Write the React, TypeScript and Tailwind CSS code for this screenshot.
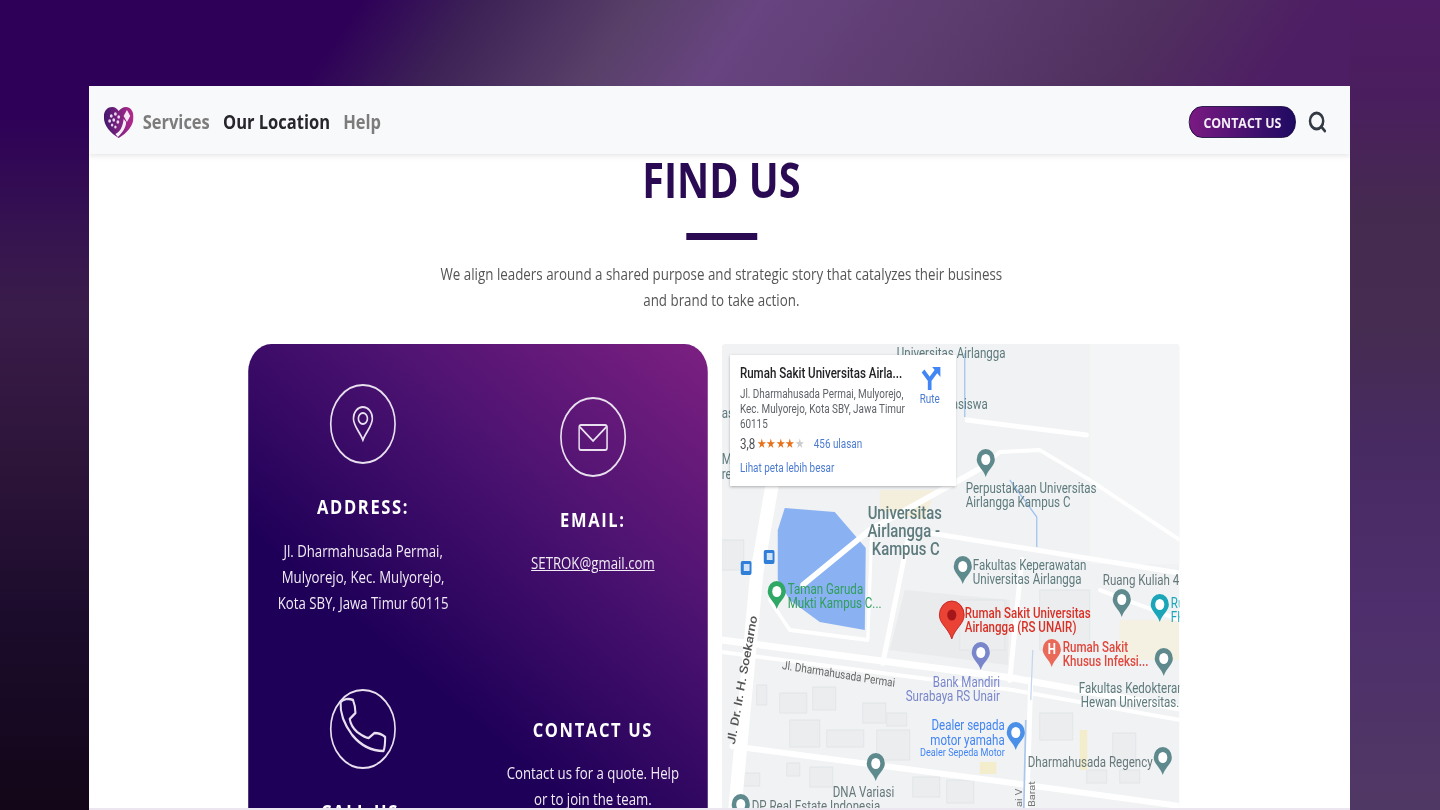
import { Search } from 'lucide-react'

// the reference is squeezed sideways, so the panel is laid out wide and scaled
const SQUEEZE = 0.825
const mx = (X: number) => (X - 722) / SQUEEZE
const my = (Y: number) => Y - 344
const pts = (list: number[][]) => list.map(([X, Y]) => `${mx(X)},${my(Y)}`).join(' ')

const roads: { w: number; p: number[][] }[] = [
  { w: 16, p: [[772, 487], [757, 573], [735, 810]] },
  { w: 7, p: [[722, 640], [905, 664], [1013, 678], [1180, 708]] },
  { w: 4, p: [[722, 652], [905, 676], [1013, 690], [1180, 720]] },
  { w: 6, p: [[732, 746], [1013, 783], [1180, 806]] },
  { w: 6, p: [[1031, 680], [1027, 810]] },
  { w: 6, p: [[1022, 560], [1010, 680]] },
  { w: 6, p: [[908, 540], [883, 663]] },
  { w: 5, p: [[930, 533], [1180, 573]] },
  { w: 6, p: [[803, 585], [870, 530], [983, 467]] },
  { w: 4, p: [[985, 465], [1000, 452], [1040, 450], [1090, 480], [1180, 540]] },
  { w: 5, p: [[967, 420], [1087, 435]] },
  { w: 4, p: [[770, 600], [790, 630], [868, 640], [872, 530]] },
  { w: 4, p: [[1100, 590], [1180, 620]] },
]

const buildings = [
  [780, 693, 27, 20], [813, 687, 23, 23], [757, 685, 10, 20], [863, 703, 23, 20], [887, 713, 20, 13],
  [790, 720, 30, 27], [827, 730, 37, 17], [877, 730, 33, 30], [787, 763, 13, 13], [810, 767, 23, 20],
  [743, 773, 17, 13], [913, 777, 27, 20], [947, 780, 27, 23], [1040, 713, 33, 27], [1113, 733, 23, 27],
  [1087, 770, 20, 13], [1120, 770, 20, 13], [960, 600, 45, 50], [1040, 590, 50, 60], [722, 540, 22, 30],
]

const labels: { X: number; Y: number; t: string; c?: string; s?: number; a?: 'start' | 'middle' | 'end'; w?: number }[] = [
  { X: 897, Y: 358, t: 'Universitas Airlangga' },
  { X: 952, Y: 409, t: 'asiswa' },
  { X: 722, Y: 418, t: 'as' },
  { X: 722, Y: 464, t: 'M' },
  { X: 722, Y: 479, t: 're' },
  { X: 966, Y: 493, t: 'Perpustakaan Universitas' },
  { X: 966, Y: 507, t: 'Airlangga Kampus C' },
  { X: 905, Y: 519, t: 'Universitas', s: 18, a: 'middle', w: 500 },
  { X: 904, Y: 537, t: 'Airlangga -', s: 18, a: 'middle', w: 500 },
  { X: 906, Y: 555, t: 'Kampus C', s: 18, a: 'middle', w: 500 },
  { X: 973, Y: 570, t: 'Fakultas Keperawatan' },
  { X: 973, Y: 584, t: 'Universitas Airlangga' },
  { X: 1103, Y: 585, t: 'Ruang Kuliah 4', c: '#66787a' },
  { X: 788, Y: 594, t: 'Taman Garuda', c: '#2f9e5b' },
  { X: 788, Y: 608, t: 'Mukti Kampus C...', c: '#2f9e5b' },
  { X: 965, Y: 618, t: 'Rumah Sakit Universitas', c: '#d93025', w: 500 },
  { X: 965, Y: 632, t: 'Airlangga (RS UNAIR)', c: '#d93025', w: 500 },
  { X: 1063, Y: 652, t: 'Rumah Sakit', c: '#e0483e', w: 500 },
  { X: 1063, Y: 666, t: 'Khusus Infeksi...', c: '#e0483e', w: 500 },
  { X: 933, Y: 687, t: 'Bank Mandiri', c: '#7986cb' },
  { X: 906, Y: 701, t: 'Surabaya RS Unair', c: '#7986cb' },
  { X: 1079, Y: 693, t: 'Fakultas Kedokteran' },
  { X: 1081, Y: 707, t: 'Hewan Universitas...' },
  { X: 1005, Y: 730, t: 'Dealer sepada', c: '#4285f4', a: 'end' },
  { X: 1005, Y: 745, t: 'motor yamaha', c: '#4285f4', a: 'end' },
  { X: 1005, Y: 756, t: 'Dealer Sepeda Motor', c: '#4285f4', a: 'end', s: 11 },
  { X: 1028, Y: 767, t: 'Dharmahusada Regency', c: '#66787a' },
  { X: 833, Y: 797, t: 'DNA Variasi', c: '#66787a' },
  { X: 752, Y: 811, t: 'DP Real Estate Indonesia', c: '#66787a' },
  { X: 1171, Y: 608, t: 'Ru', c: '#1aa5b8' },
  { X: 1171, Y: 622, t: 'FK', c: '#1aa5b8' },
]

const pins: { X: number; Y: number; c: string; plain?: boolean }[] = [
  { X: 986, Y: 449, c: '#5f8a8d' },
  { X: 963, Y: 556, c: '#5f8a8d' },
  { X: 1122, Y: 589, c: '#5f8a8d' },
  { X: 1160, Y: 594, c: '#1aa5b8' },
  { X: 777, Y: 581, c: '#2fa866' },
  { X: 981, Y: 642, c: '#7986cb' },
  { X: 1052, Y: 639, c: '#ea6a5a', plain: true },
  { X: 1164, Y: 648, c: '#5f8a8d' },
  { X: 1016, Y: 722, c: '#4a90e8' },
  { X: 1163, Y: 747, c: '#5f8a8d' },
  { X: 876, Y: 753, c: '#5f8a8d' },
  { X: 741, Y: 794, c: '#5f8a8d' },
]

function MapCanvas() {
  return (
    <svg width="555" height="466" className="block font-['Roboto',sans-serif]">
      <rect width="555" height="466" fill="#f0f2f3" />
      <rect x={mx(1090)} y="0" width="120" height="220" fill="#f3f5f6" />
      <polygon points={pts([[905, 590], [1010, 600], [1008, 665], [890, 650]])} fill="#e9ebed" />
      <polygon points={pts([[880, 490], [935, 490], [925, 520], [880, 510]])} fill="#f4efdc" />
      <rect x={mx(1120)} y={my(620)} width="72" height="40" fill="#f5f1e2" />
      <rect x={mx(1080)} y={my(730)} width="9" height="40" fill="#f4edcc" />
      <rect x={mx(980)} y={my(762)} width="20" height="12" fill="#f4edcc" />
      {buildings.map(([X, Y, W, H], i) => (
        <rect key={i} x={mx(X)} y={my(Y)} width={W / SQUEEZE} height={H} fill="#ebedef" stroke="#e2e5e7" />
      ))}
      <polygon
        points={pts([[785, 508], [835, 512], [866, 548], [865, 630], [820, 622], [790, 600], [778, 580], [778, 530]])}
        fill="#8ab2f3"
      />
      {roads.map((r, i) => (
        <polyline key={i} points={pts(r.p)} fill="none" stroke="#ffffff" strokeWidth={r.w} strokeLinejoin="round" strokeLinecap="round" />
      ))}
      <polyline points={pts([[965, 353], [965, 417]])} fill="none" stroke="#9ec1f0" strokeWidth="1.5" />
      <polyline points={pts([[1010, 480], [1037, 517], [1037, 547]])} fill="none" stroke="#9ec1f0" strokeWidth="1.5" />
      <polyline points={pts([[1033, 650], [1031, 700]])} fill="none" stroke="#c3d6ee" strokeWidth="1.5" />
      <polyline points={pts([[1026, 720], [1024, 810]])} fill="none" stroke="#a9c6ec" strokeWidth="2" />
      {labels.map((l) => (
        <text
          key={l.t + l.Y}
          x={mx(l.X)}
          y={my(l.Y)}
          fill={l.c ?? '#5d7a7d'}
          fontSize={l.s ?? 14}
          fontWeight={l.w ?? 400}
          textAnchor={l.a ?? 'start'}
        >
          {l.t}
        </text>
      ))}
      <text transform={`translate(${mx(782)} ${my(669)}) rotate(7.5)`} fill="#666" fontSize="12">Jl. Dharmahusada Permai</text>
      <text transform={`translate(${mx(735)} ${my(745)}) rotate(-78)`} fill="#555" fontSize="14" fontWeight="500">Jl. Dr. Ir. H. Soekarno</text>
      <text transform={`translate(${mx(1022)} ${my(807)}) rotate(-90)`} fill="#777" fontSize="11">ai V</text>
      <text transform={`translate(${mx(1035)} ${my(807)}) rotate(-90)`} fill="#777" fontSize="11">Barat</text>
      {pins.map((p) => (
        <g key={`${p.X}-${p.Y}`} transform={`translate(${mx(p.X)} ${my(p.Y)})`}>
          <path d="M0 28C-3 20-11 17-11 10.5A11 10.5 0 1 1 11 10.5C11 17 3 20 0 28Z" fill={p.c} />
          {!p.plain && <circle cy="10.5" r="5.5" fill="#fff" />}
        </g>
      ))}
      <g transform={`translate(${mx(952)} ${my(601)})`}>
        <path d="M0 38C-4 27-15 23-15 14A15 14 0 1 1 15 14C15 23 4 27 0 38Z" fill="#ea4335" stroke="#c5221f" />
        <circle cy="14" r="5.5" fill="#a5161a" />
      </g>
      <text x={mx(1052)} y={my(654)} fill="#ffffff" fontSize="14" fontWeight="700" textAnchor="middle">H</text>
      <rect x={mx(764)} y={my(550)} width="13" height="14" rx="2" fill="#2f7ed8" />
      <rect x={mx(767)} y={my(553)} width="7" height="7" fill="#cfe2f8" />
      <rect x={mx(741)} y={my(561)} width="13" height="14" rx="2" fill="#2f7ed8" />
      <rect x={mx(744)} y={my(564)} width="7" height="7" fill="#cfe2f8" />
    </svg>
  )
}

function InfoBox() {
  return (
    <div className="absolute left-[10px] top-[11px] flex h-[131px] w-[274px] justify-between bg-white px-3 pt-[9px] font-['Roboto',sans-serif] shadow-[0_1px_3px_rgba(0,0,0,0.3)]">
      <div className="w-[205px]">
        <p className="whitespace-nowrap text-[14px] font-medium leading-[18px] text-[#202124]">Rumah Sakit Universitas Airla...</p>
        <p className="mt-[5px] text-[12px] leading-[15px] text-[#5f6368]">Jl. Dharmahusada Permai, Mulyorejo, Kec. Mulyorejo, Kota SBY, Jawa Timur 60115</p>
        <div className="mt-[2px] flex items-center text-[14px] leading-[20px] text-[#4a4d52]">
          <span>3,8</span>
          <span className="ml-[2px] text-[13px] tracking-[-0.5px] text-[#e7711b]">★★★★</span>
          <span className="text-[13px] text-[#cccccc]">★</span>
          <span className="ml-[11px] text-[12px] text-[#4a7bd0]">456 ulasan</span>
        </div>
        <p className="mt-[5px] text-[12px] leading-[18px] text-[#4a7bd0]">Lihat peta lebih besar</p>
      </div>
      <div className="flex w-[40px] flex-col items-center pt-[1px]">
        <svg width="30" height="26" viewBox="0 0 30 26">
          <path d="M15 25V15L7 6M15 15L24 5" fill="none" stroke="#4285f4" strokeWidth="4.5" />
          <path d="M18 2H28V12Z" fill="#4285f4" />
        </svg>
        <span className="mt-[1px] text-[12px] leading-[14px] text-[#4a7bd0]">Rute</span>
      </div>
    </div>
  )
}

function Logo() {
  return (
    <svg width="36" height="31" viewBox="0 0 36 31">
      <defs>
        <linearGradient id="heart" x1="0" y1="0" x2="1" y2="0">
          <stop offset="0" stopColor="#43186f" />
          <stop offset="1" stopColor="#b52a8e" />
        </linearGradient>
      </defs>
      <path d="M18 31C8 26 0 19 0 10C0 3 5 0 10 0C14 0 16 2 18 4C20 2 23 0 27 0C32 0 36 4 36 10C36 19 28 26 18 31Z" fill="url(#heart)" />
      <path d="M28 3L32 9L28 15L24 9Z" fill="#f5e6f5" />
      <path d="M17 30C22 26 27 21 27 15L24 12C23 19 20 25 14 27Z" fill="#f5f0f8" />
      <g fill="#e8d8ee">
        <circle cx="9" cy="9" r="1.7" /><circle cx="14" cy="7" r="1.7" /><circle cx="18" cy="10" r="1.7" />
        <circle cx="7" cy="14" r="1.7" /><circle cx="12" cy="13" r="1.7" /><circle cx="17" cy="15" r="1.7" />
        <circle cx="10" cy="18" r="1.5" /><circle cx="14" cy="20" r="1.5" />
      </g>
    </svg>
  )
}

function IconCircle({ children }: { children: React.ReactNode }) {
  return (
    <div className="mx-auto flex h-[80px] w-[80px] items-center justify-center rounded-full border-2 border-[#e8e0ee]">
      {children}
    </div>
  )
}

export default function App() {
  return (
    <div className="h-[810px] w-[1440px] overflow-hidden pl-[89px] pt-[86px] font-['Open_Sans',sans-serif] [background:linear-gradient(to_bottom,#2e0058_0%,#2e0058_14%,#36154f_30%,#3a1c4a_38%,#2c1438_58%,#1c0c2c_76%,#120618_100%)_left_top/89px_100%_no-repeat,linear-gradient(to_bottom,#4e1c64_0%,#4a1e5e_12%,#452a50_26%,#452c50_40%,#482a62_55%,#4e2e6c_75%,#503864_100%)_right_top/90px_100%_no-repeat,linear-gradient(125deg,#2e0058_0%,#2e0058_18%,#3d2256_24%,#584069_32%,#684480_38%,#5a3a6c_50%,#50305e_58%,#4e1e64_66%,#4e1c64_100%)]">
      <div className="h-[724px] w-[1261px] overflow-hidden border-b-2 border-[#ece6f0] bg-white">
        <div className="relative h-full w-[1528px] origin-top-left scale-x-[0.825] blur-[0.7px]">
          <nav className="relative z-10 flex h-[68px] items-center justify-between bg-[#f8f9fa] pl-[18px] pr-[27px] pt-1 shadow-[0_2px_6px_rgba(0,0,0,0.1)]">
            <div className="flex items-center">
              <Logo />
              <ul className="ml-[11px] flex gap-4 text-[20px] font-bold leading-[28px]">
                <li className="text-[#7c7c7c]">Services</li>
                <li className="text-[#26262b]">Our Location</li>
                <li className="text-[#7c7c7c]">Help</li>
              </ul>
            </div>
            <div className="flex items-center gap-[14px]">
              <button className="h-[32px] w-[130px] rounded-full border border-[#1c0a40] bg-[linear-gradient(90deg,#7a1a82,#1e0a62)] text-[15px] font-bold text-[#f3eef6]">
                CONTACT US
              </button>
              <Search className="h-[24px] w-[24px] text-[#333a44]" strokeWidth={3} />
            </div>
          </nav>

          <section className="pl-[5px] pt-[2px] text-center">
            <h1 className="text-[48px] font-bold leading-[48px] text-[#2a0a52]">FIND US</h1>
            <div className="mx-auto mt-[29px] h-[7px] w-[86px] bg-[#2a0a52]" />
            <p className="mx-auto mt-[21px] w-[690px] text-[16.2px] leading-[26px] text-[#555555]">
              We align leaders around a shared purpose and strategic story that catalyzes their business and brand to take action.
            </p>
          </section>

          <div className="ml-[193px] mt-[31px] flex gap-[17px]">
            <div className="grid h-[600px] w-[557px] grid-cols-2 grid-rows-[345px_1fr] rounded-t-[28px] bg-[linear-gradient(215deg,#7c2082_0%,#4b1270_30%,#1f0058_58%)] text-center text-[#f1ecf4]">
              <div className="pt-[40px]">
                <IconCircle>
                  <svg width="26" height="36" viewBox="0 0 26 36" fill="none" stroke="#e8e0ee" strokeWidth="2">
                    <path d="M13 34C10 27 1.5 20 1.5 12.5A11.5 11.5 0 0 1 24.5 12.5C24.5 20 16 27 13 34Z" />
                    <circle cx="13" cy="12.5" r="5.5" />
                  </svg>
                </IconCircle>
                <h3 className="mt-[29px] text-[20px] font-bold leading-[28px] tracking-[2px] text-white">ADDRESS:</h3>
                <p className="mx-auto mt-[17px] w-[225px] text-[16px] leading-[26px]">
                  Jl. Dharmahusada Permai, Mulyorejo, Kec. Mulyorejo, Kota SBY, Jawa Timur 60115
                </p>
              </div>
              <div className="pt-[53px]">
                <IconCircle>
                  <svg width="36" height="27" viewBox="0 0 36 27" fill="none" stroke="#e8e0ee" strokeWidth="2">
                    <rect x="1" y="1" width="34" height="25" rx="2.5" />
                    <path d="M2 3L18 17L34 3" />
                  </svg>
                </IconCircle>
                <h3 className="mt-[29px] text-[20px] font-bold leading-[28px] tracking-[2px] text-white">EMAIL:</h3>
                <a className="mt-[16px] block text-[16px] leading-[26px] underline">SETROK@gmail.com</a>
              </div>
              <div>
                <IconCircle>
                  <svg width="60" height="60" viewBox="0 0 60 60" fill="none" stroke="#e8e0ee" strokeWidth="2.5" strokeLinejoin="round" className="mb-[9px]">
                    <path d="M3 7C6 4 13 3 18 5C20 9 21 14 21 18L14 24C15 29 19 34 23 37C28 40 33 43 37 43L44 38C49 38 53 39 57 42C57 47 57 52 55 56C41 56 27 50 17 40C8 30 2 19 3 7Z" />
                  </svg>
                </IconCircle>
                <h3 className="mt-[29px] text-[20px] font-bold leading-[28px] tracking-[2px] text-white">CALL US:</h3>
              </div>
              <div className="pt-[27px]">
                <h3 className="text-[20px] font-bold leading-[28px] tracking-[2px] text-white">CONTACT US</h3>
                <p className="mx-auto mt-[16px] w-[220px] text-[16px] leading-[26px]">
                  Contact us for a quote. Help or to join the team.
                </p>
              </div>
            </div>
            <div className="relative h-[466px] w-[555px] overflow-hidden rounded-[4px]">
              <MapCanvas />
              <InfoBox />
            </div>
          </div>
        </div>
      </div>
    </div>
  )
}
